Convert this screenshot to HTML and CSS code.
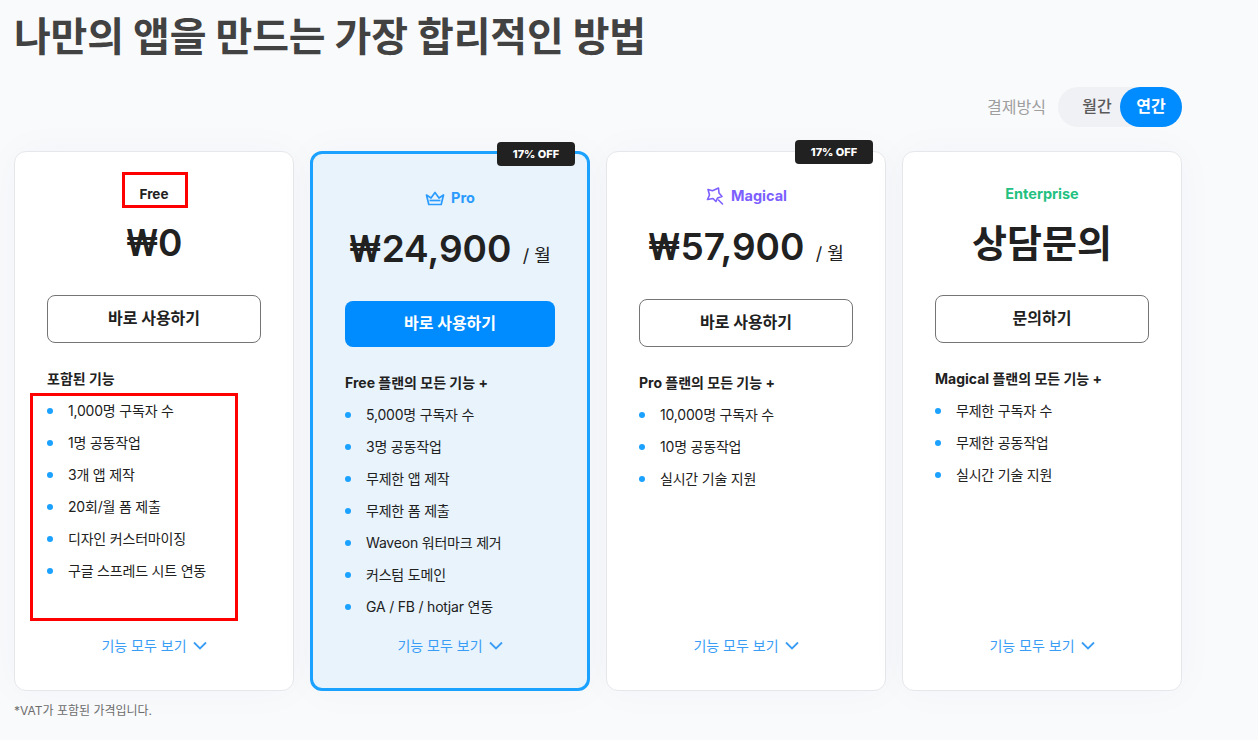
FILE: index.html
```html
<!DOCTYPE html>
<html lang="ko">
<head>
  <meta charset="UTF-8" />
  <meta name="viewport" content="width=device-width, initial-scale=1" />
  <title>요금제</title>
  <link rel="stylesheet" href="styles.css">
</head>
<body>
  <div class="container">
    <h1>나만의 앱을 만드는 가장 합리적인 방법</h1>

    <div class="billing">
      <span class="billing-label">결제방식</span>
      <div class="toggle">
        <span class="toggle-item">월간</span>
        <span class="toggle-item active">연간</span>
      </div>
    </div>

    <div class="plans">
      <section class="plan">
        <div class="plan-name free">Free</div>
        <div class="price"><span class="won">₩</span>0</div>
        <a class="btn">바로 사용하기</a>
        <h2>포함된 기능</h2>
        <ul>
          <li>1,000명 구독자 수</li>
          <li>1명 공동작업</li>
          <li>3개 앱 제작</li>
          <li>20회/월 폼 제출</li>
          <li>디자인 커스터마이징</li>
          <li>구글 스프레드 시트 연동</li>
        </ul>
        <a class="more">기능 모두 보기
          <svg width="14" height="9" viewBox="0 0 14 9" fill="none" stroke="currentColor" stroke-width="1.8"><path d="M1 1.5l6 6 6-6"/></svg>
        </a>
        <div class="mark mark-name"></div>
        <div class="mark mark-list"></div>
      </section>

      <section class="plan plan-pro">
        <span class="badge">17% OFF</span>
        <div class="plan-name pro">
          <svg width="20" height="16" viewBox="0 0 20 16" fill="none" stroke="currentColor" stroke-width="1.7" stroke-linejoin="round"><path d="M1.500 5L6 8l4-5.500L14 8l4.500-3-2.300 9.500H3.800z"/><path d="M4.500 10.500h11"/></svg>
          Pro
        </div>
        <div class="price"><span class="won">₩</span>24,900 <small>/ 월</small></div>
        <a class="btn btn-primary">바로 사용하기</a>
        <h2>Free 플랜의 모든 기능 +</h2>
        <ul>
          <li>5,000명 구독자 수</li>
          <li>3명 공동작업</li>
          <li>무제한 앱 제작</li>
          <li>무제한 폼 제출</li>
          <li>Waveon 워터마크 제거</li>
          <li>커스텀 도메인</li>
          <li>GA / FB / hotjar 연동</li>
        </ul>
        <a class="more">기능 모두 보기
          <svg width="14" height="9" viewBox="0 0 14 9" fill="none" stroke="currentColor" stroke-width="1.8"><path d="M1 1.5l6 6 6-6"/></svg>
        </a>
      </section>

      <section class="plan">
        <span class="badge">17% OFF</span>
        <div class="plan-name magical">
          <svg width="20" height="20" viewBox="0 0 20 20" fill="none" stroke="currentColor" stroke-width="1.6" stroke-linejoin="round" stroke-linecap="round"><path d="M3 3.500l4.500 1.200L13.500 2l.5 5 3 3.500-4.500 1.500-1.500 3.500-3-3-5.500 1 2-4.500z"/><path d="M13.500 14l4 4"/></svg>
          Magical
        </div>
        <div class="price"><span class="won">₩</span>57,900 <small>/ 월</small></div>
        <a class="btn">바로 사용하기</a>
        <h2>Pro 플랜의 모든 기능 +</h2>
        <ul>
          <li>10,000명 구독자 수</li>
          <li>10명 공동작업</li>
          <li>실시간 기술 지원</li>
        </ul>
        <a class="more">기능 모두 보기
          <svg width="14" height="9" viewBox="0 0 14 9" fill="none" stroke="currentColor" stroke-width="1.8"><path d="M1 1.5l6 6 6-6"/></svg>
        </a>
      </section>

      <section class="plan">
        <div class="plan-name enterprise">Enterprise</div>
        <div class="price price-ko">상담문의</div>
        <a class="btn">문의하기</a>
        <h2>Magical 플랜의 모든 기능 +</h2>
        <ul>
          <li>무제한 구독자 수</li>
          <li>무제한 공동작업</li>
          <li>실시간 기술 지원</li>
        </ul>
        <a class="more">기능 모두 보기
          <svg width="14" height="9" viewBox="0 0 14 9" fill="none" stroke="currentColor" stroke-width="1.8"><path d="M1 1.5l6 6 6-6"/></svg>
        </a>
      </section>
    </div>

    <p class="note">*VAT가 포함된 가격입니다.</p>
  </div>
</body>
</html>
```

FILE: styles.css
```css
:root {
  --blue: #008cff;
  --light-blue: #1ba1ff;
  --dark: #212121;
}
* {
  box-sizing: border-box;
}
body {
  margin: 0;
  background: #f9fafc;
  color: var(--dark);
  font-family: Inter, "Noto Sans CJK KR", sans-serif;
}
.container {
  width: 1168px;
  margin-left: 14px;
  height: 740px;
}
h1 {
  margin: 0;
  padding-top: 10px;
  height: 87px;
  font-size: 40px;
  line-height: 54px;
  font-weight: 700;
  letter-spacing: -0.2px;
  color: #424242;
}
.billing {
  display: flex;
  justify-content: flex-end;
  align-items: center;
  gap: 12px;
  height: 40px;
}
.billing-label {
  padding-bottom: 3px;
  font-size: 16px;
  color: #9e9e9e;
}
.toggle {
  display: flex;
  width: 124px;
  height: 40px;
  border-radius: 20px;
  background: #f0f1f5;
}
.toggle-item {
  flex: 1;
  padding-left: 16px;
  text-align: center;
  line-height: 38px;
  font-size: 16px;
  font-weight: 500;
  color: #5a5a5a;
}
.toggle-item.active {
  flex: 0 0 62px;
  padding-left: 0;
  border-radius: 20px;
  background: var(--blue);
  color: #fff;
  font-weight: 700;
}
.plans {
  display: grid;
  grid-template-columns: repeat(4, 280px);
  gap: 16px;
  margin-top: 24px;
}
.plan {
  position: relative;
  display: flex;
  flex-direction: column;
  height: 540px;
  padding: 32px 32px 33px;
  background: #fff;
  border: 1px solid #e6e7eb;
  border-radius: 12px;
  box-shadow: 0 0 40px rgba(30, 40, 80, 0.03);
}
.plan-pro {
  padding-bottom: 31px;
  background: #e8f3fc;
  border: 3px solid var(--light-blue);
}
.badge {
  position: absolute;
  top: -12px;
  right: 12px;
  width: 78px;
  height: 24px;
  border-radius: 4px;
  background: var(--dark);
  color: #fff;
  text-align: center;
  font-size: 11px;
  font-weight: 800;
  line-height: 24px;
}
.plan-name {
  display: flex;
  justify-content: center;
  align-items: center;
  gap: 6px;
  height: 24px;
  padding-bottom: 2px;
  font-size: 14.5px;
  font-weight: 700;
}
.plan-name svg {
  margin-top: 2px;
}
.plan-name.free {
  height: 20px;
  padding-bottom: 0;
  font-size: 13.500px;
}
.plan-name.pro {
  color: #2b9bff;
}
.plan-name.magical {
  color: #7d5fff;
}
.plan-name.enterprise {
  height: 20px;
  color: #22c17f;
}
.price {
  height: 54px;
  margin-top: 12px;
  text-align: center;
  font-size: 37px;
  line-height: 54px;
  font-weight: 600;
  white-space: nowrap;
}
.won {
  display: inline-block;
  margin-right: -6px;
  font-weight: 700;
  transform: scaleX(0.84);
  transform-origin: left center;
}
.price small {
  margin-left: 2px;
  font-size: 18px;
  font-weight: 400;
}
.price-ko {
  font-size: 38px;
  font-weight: 700;
}
.btn {
  display: block;
  height: 48px;
  margin-top: 25px;
  border: 1px solid #757575;
  border-radius: 8px;
  text-align: center;
  font-size: 16px;
  font-weight: 700;
  line-height: 44px;
}
.btn-primary {
  height: 46px;
  border: none;
  background: var(--blue);
  color: #fff;
}
h2 {
  height: 24px;
  margin: 24px 0 0;
  padding-top: 1px;
  font-size: 14px;
  line-height: 22px;
  font-weight: 700;
}
ul {
  margin: 4px 0 0;
  padding: 0;
  list-style: none;
}
li {
  position: relative;
  height: 32px;
  padding: 1px 0 0 21px;
  font-size: 14px;
  letter-spacing: -0.2px;
  line-height: 30px;
}
li::before {
  content: "";
  position: absolute;
  left: 0;
  top: 13px;
  width: 6px;
  height: 6px;
  border-radius: 50%;
  background: var(--light-blue);
}
.more {
  display: flex;
  justify-content: center;
  align-items: center;
  gap: 6px;
  height: 24px;
  margin-top: auto;
  font-size: 14px;
  color: #3a9df5;
}
.mark {
  position: absolute;
  border: 3px solid #f00;
}
.mark-name {
  left: 107px;
  top: 20px;
  width: 66px;
  height: 36px;
}
.mark-list {
  left: 15px;
  top: 241px;
  width: 208px;
  height: 228px;
}
.note {
  margin: 12px 0 0;
  font-size: 12px;
  line-height: 16px;
  color: #6d6d6d;
}
```
